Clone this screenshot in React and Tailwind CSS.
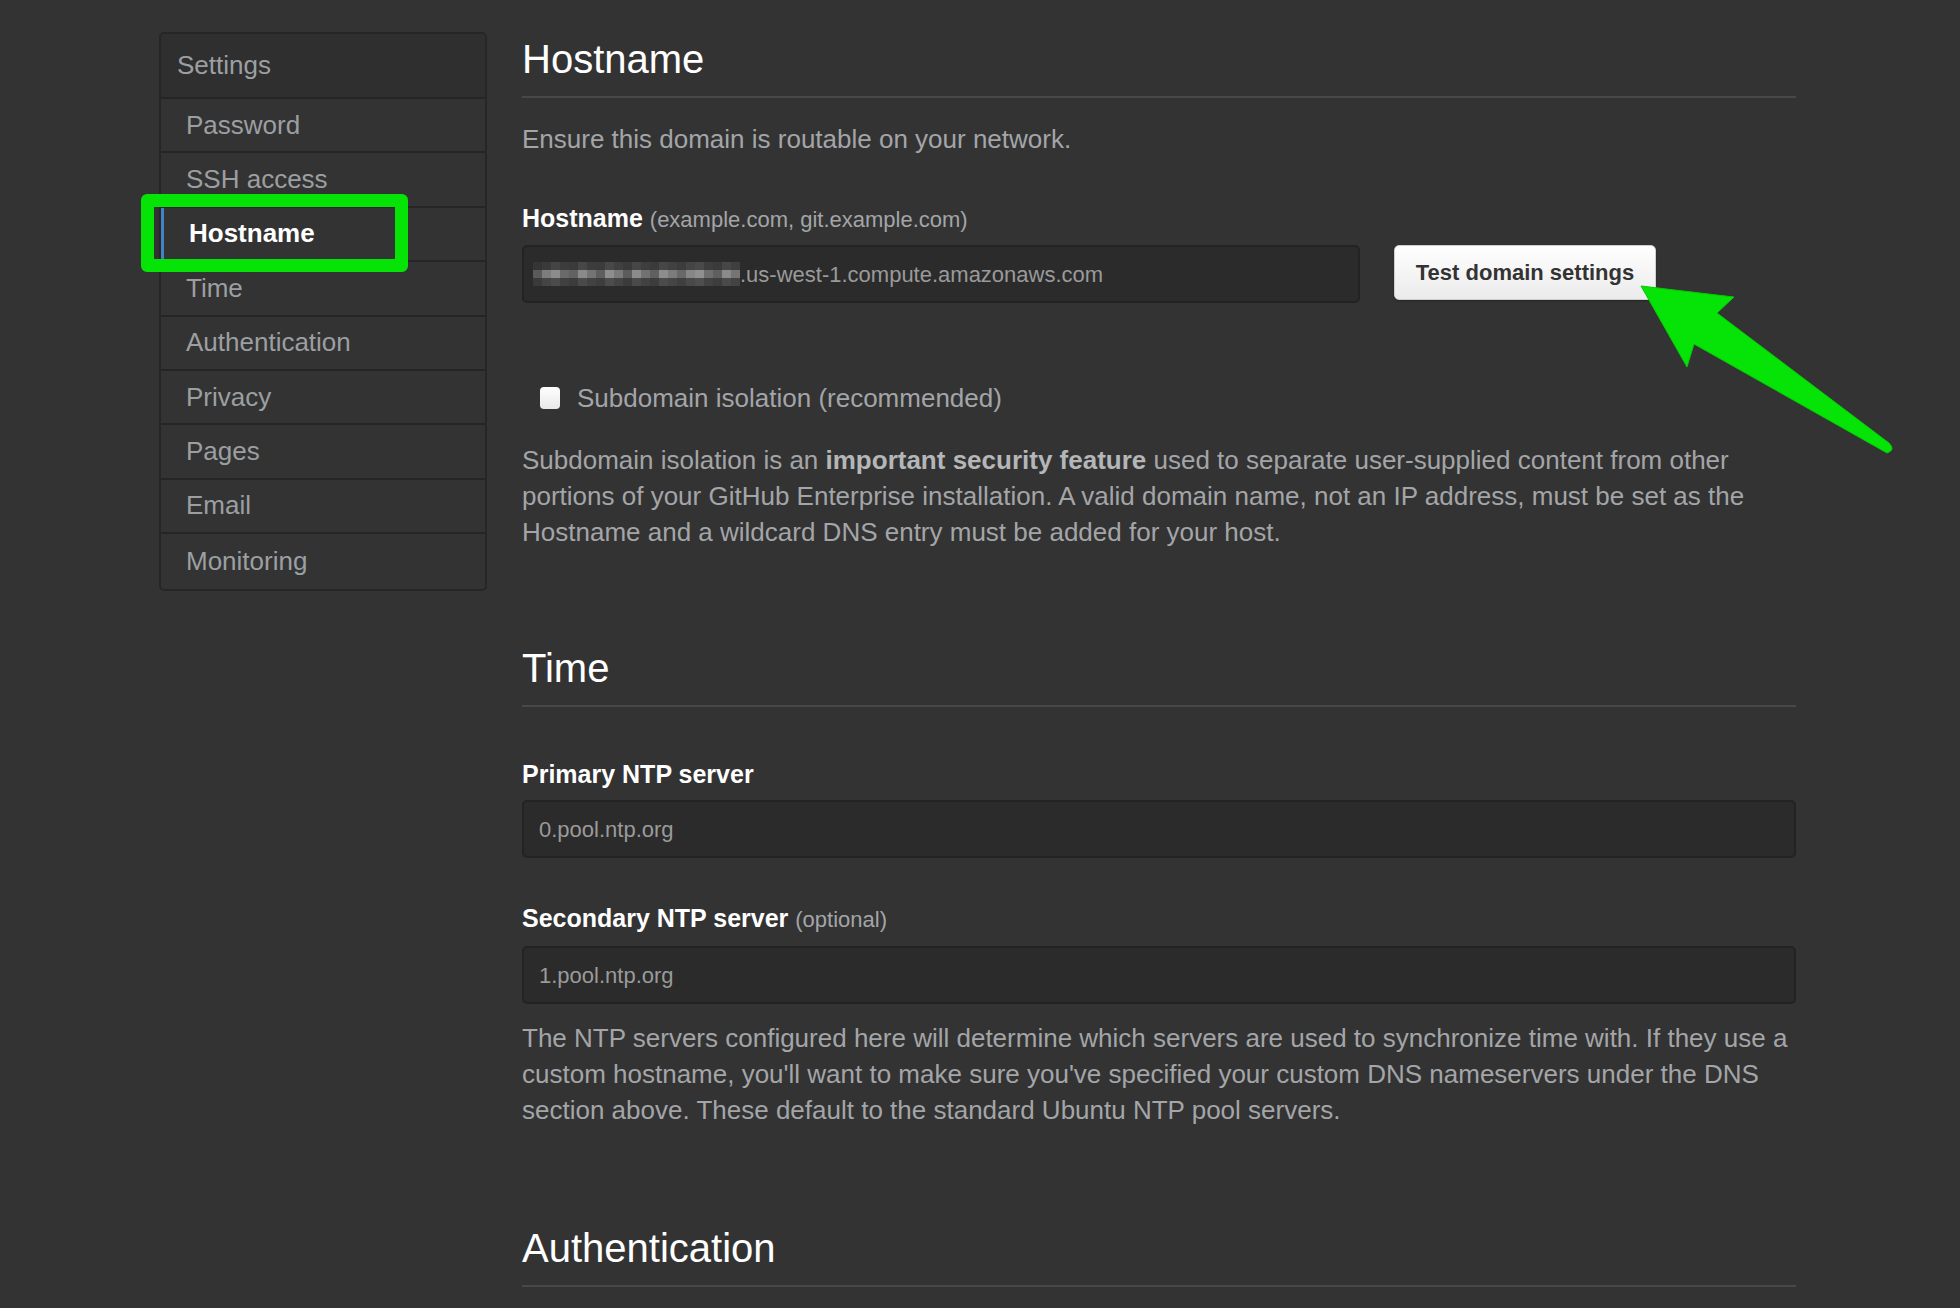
import React from "react";

const navItems = ["Password", "SSH access", "Hostname", "Time", "Authentication", "Privacy", "Pages", "Email", "Monitoring"];

const blur = [
  ["#353535","#3a3a3a","#444444","#3c3c3c","#3a3a3a","#474747","#3d3d3d","#3b3b3b","#484848","#404040","#3a3a3a","#464646","#3e3e3e","#3b3b3b","#474747","#414141","#3c3c3c","#454545","#4a4a4a","#3e3e3e","#3a3a3a","#474747","#3f3f3f"],
  ["#5a5a5a","#7d7d7d","#8c8c8c","#6a6a6a","#626262","#8a8a8a","#747474","#5e5e5e","#8e8e8e","#7a7a7a","#5c5c5c","#8b8b8b","#717171","#606060","#8d8d8d","#7c7c7c","#686868","#868686","#909090","#6e6e6e","#5f5f5f","#8a8a8a","#757575"],
  ["#3a3a3a","#454545","#4b4b4b","#404040","#3c3c3c","#4a4a4a","#424242","#3d3d3d","#4c4c4c","#444444","#3b3b3b","#4a4a4a","#414141","#3c3c3c","#4b4b4b","#454545","#3f3f3f","#494949","#4e4e4e","#424242","#3d3d3d","#4a4a4a","#434343"],
];

function Heading({ children, className = "" }) {
  return (
    <h2 className={`text-[40px] leading-[48px] text-white font-normal pb-[13px] border-b-2 border-[#484848] ${className}`}>
      {children}
    </h2>
  );
}

function TextInput({ children }) {
  return (
    <div className="h-[58px] rounded-[5px] border-2 border-[#232323] bg-[#2b2b2b] flex items-center pl-[15px] text-[22px] text-[#9a9a9a]">
      {children}
    </div>
  );
}

export default function App() {
  return (
    <div className="relative w-[1960px] min-h-[1308px] h-[1308px] overflow-hidden bg-[#333333] font-['Liberation_Sans',Arial,Helvetica,sans-serif]">
      <div className="flex items-start pl-[159px] gap-[35px]">
        {/* Sidebar */}
        <nav className="mt-[32px] w-[328px] rounded-[5px] border-2 border-[#262626] overflow-hidden">
          <div className="h-[65px] flex items-center pl-[16px] bg-[#2f2f2f] border-b-2 border-[#252525] text-[26px] text-[#9c9fa2]">
            Settings
          </div>
          {navItems.map((item, i) => {
            const active = item === "Hostname";
            const last = i === navItems.length - 1;
            return (
              <div
                key={item}
                className={`h-[54.4px] flex items-center text-[26px] ${last ? "" : "border-b-2 border-[#252525]"} ${
                  active
                    ? "border-l-[3px] border-l-[#4183c4] pl-[25px] font-bold text-white"
                    : "pl-[25px] text-[#9c9fa2]"
                }`}
              >
                {item}
              </div>
            );
          })}
        </nav>

        {/* Main */}
        <main className="w-[1274px] pt-[35px]">
          <Heading>Hostname</Heading>
          <p className="mt-[23px] text-[26px] leading-[36px] text-[#a3a5a8]">Ensure this domain is routable on your network.</p>

          <div className="mt-[43px] text-[25px] leading-[36px] text-white font-bold">
            Hostname <span className="font-normal text-[22px] text-[#a3a5a8]">(example.com, git.example.com)</span>
          </div>
          <div className="mt-[7px] flex items-start gap-[34px]">
            <div className="w-[838px]">
              <TextInput>
                <div className="flex flex-col -ml-[6px]">
                  {blur.map((row, r) => (
                    <div key={r} className="flex">
                      {row.map((c, k) => (
                        <span key={k} className="block w-[9px] h-[8px]" style={{ backgroundColor: c }} />
                      ))}
                    </div>
                  ))}
                </div>
                <span>.us-west-1.compute.amazonaws.com</span>
              </TextInput>
            </div>
            <button className="h-[55px] w-[262px] rounded-[5px] border border-[#cfcfcf] bg-gradient-to-b from-[#ffffff] to-[#ebebeb] text-[22px] font-bold text-[#333333] shadow-[0_1px_2px_rgba(0,0,0,0.3)]">
              Test domain settings
            </button>
          </div>

          <div className="mt-[77px] flex items-center pl-[18px] h-[36px]">
            <span className="block w-[20px] h-[22px] rounded-[4px] bg-gradient-to-b from-[#ffffff] to-[#e8e8e8]"></span>
            <span className="ml-[17px] text-[26px] leading-[36px] text-[#a3a5a8]">Subdomain isolation (recommended)</span>
          </div>

          <p className="mt-[26px] text-[26px] leading-[36px] text-[#a3a5a8]">
            Subdomain isolation is an <strong className="font-bold text-[#b4b6b8]">important security feature</strong> used to separate user-supplied content from other portions of your GitHub Enterprise installation. A valid domain name, not an IP address, must be set as the Hostname and a wildcard DNS entry must be added for your host.
          </p>

          <Heading className="mt-[94px]">Time</Heading>

          <div className="mt-[49px] text-[25px] leading-[36px] text-white font-bold">Primary NTP server</div>
          <div className="mt-[8px]">
            <TextInput>0.pool.ntp.org</TextInput>
          </div>

          <div className="mt-[42px] text-[25px] leading-[36px] text-white font-bold">
            Secondary NTP server <span className="font-normal text-[22px] text-[#a3a5a8]">(optional)</span>
          </div>
          <div className="mt-[8px]">
            <TextInput>1.pool.ntp.org</TextInput>
          </div>

          <p className="mt-[16px] text-[26px] leading-[36px] text-[#a3a5a8]">
            The NTP servers configured here will determine which servers are used to synchronize time with. If they use a custom hostname, you'll want to make sure you've specified your custom DNS nameservers under the DNS section above. These default to the standard Ubuntu NTP pool servers.
          </p>

          <Heading className="mt-[96px]">Authentication</Heading>
        </main>
      </div>

      {/* Green highlight box */}
      <div className="absolute left-[141px] top-[194px] w-[267px] h-[78px] rounded-[6px] border-[13px] border-[#06e306]"></div>

      {/* Green arrow */}
      <svg className="absolute left-0 top-0 pointer-events-none" width="1960" height="1308" viewBox="0 0 1960 1308">
        <path
          d="M1641 286 L1734 297 L1717 313 L1889 443 Q1896 450 1887 453 L1694 344 L1687 367 Z"
          fill="#06e306"
          stroke="#05c805"
          strokeWidth="1"
          strokeLinejoin="round"
        />
      </svg>
    </div>
  );
}
